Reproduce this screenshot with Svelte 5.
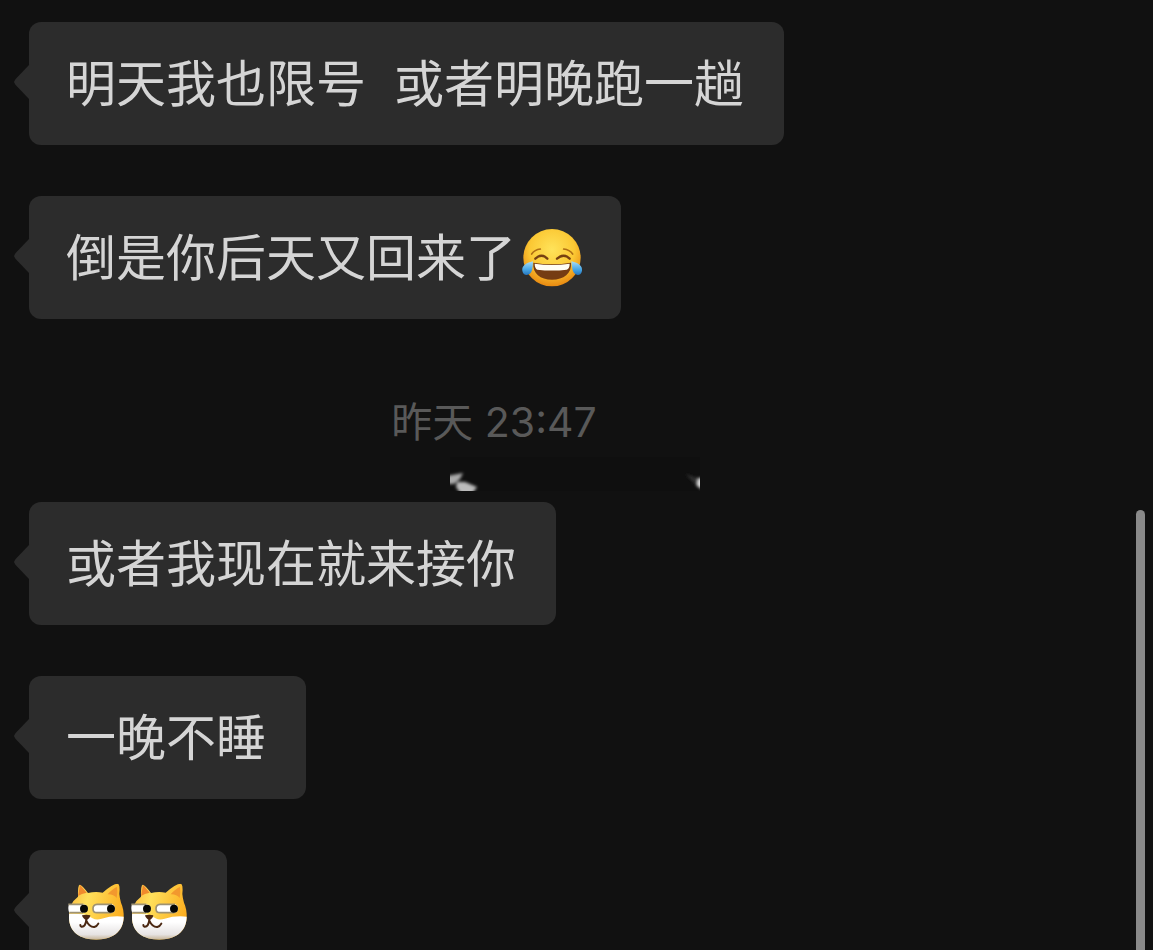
<script lang="ts">
	type Message = { text?: string; emoji?: 'joy' | 'doge'; count?: number };

	const earlier: Message[] = [
		{ text: '明天我也限号  或者明晚跑一趟' },
		{ text: '倒是你后天又回来了', emoji: 'joy', count: 1 }
	];
	const later: Message[] = [
		{ text: '或者我现在就来接你' },
		{ text: '一晚不睡' },
		{ emoji: 'doge', count: 2 }
	];
</script>

{#snippet joy()}
	<svg class="emoji joy" viewBox="35 38 186 180" role="img" aria-label="笑哭">
		<defs>
			<radialGradient id="joy-face" cx="0.5" cy="0.36" r="0.65">
				<stop offset="0" stop-color="#ffe35a" />
				<stop offset="0.6" stop-color="#fbc834" />
				<stop offset="1" stop-color="#e88710" />
			</radialGradient>
			<linearGradient id="joy-tear" x1="0" y1="0" x2="0" y2="1">
				<stop offset="0" stop-color="#a9dcf5" />
				<stop offset="0.6" stop-color="#47a7e6" />
				<stop offset="1" stop-color="#2877bd" />
			</linearGradient>
		</defs>
		<circle cx="128" cy="127" r="86" fill="url(#joy-face)" />
		<g fill="none" stroke="#774111" stroke-linecap="round">
			<path d="M67 116Q76 103 93 101M163 101Q181 103 190 116" stroke="#b06f14" stroke-width="5" />
			<path d="M78 130Q97 113 114 130M143 130Q163 113 181 130" stroke-width="7" />
		</g>
		<path d="M72 142Q128 151 185 142C188 174 163 193 128 193C93 193 69 174 72 142Z" fill="#753c13" />
		<path d="M76 145Q128 153 181 145Q181 160 172 163Q128 168 84 163Q76 159 76 145Z" fill="#fffdf4" />
		<path d="M71 138C48 143 37 153 39 166C41 183 63 183 68 165Q71 153 71 138Z" fill="url(#joy-tear)" />
		<path d="M186 138C209 143 220 153 218 166C216 183 195 183 190 165Q187 153 186 138Z" fill="url(#joy-tear)" />
	</svg>
{/snippet}

{#snippet doge()}
	<svg class="emoji" viewBox="18 22 180 180" role="img" aria-label="doge">
		<defs>
			<linearGradient id="doge-fur" x1="0" y1="0" x2="1" y2="0.3">
				<stop offset="0" stop-color="#f9ae35" />
				<stop offset="0.4" stop-color="#ffe05b" />
				<stop offset="1" stop-color="#fcae20" />
			</linearGradient>
			<linearGradient id="doge-muzzle" x1="0" y1="0" x2="0" y2="1">
				<stop offset="0.3" stop-color="#ffffff" />
				<stop offset="0.75" stop-color="#e6e3e3" />
				<stop offset="1" stop-color="#bda680" />
			</linearGradient>
			<clipPath id="doge-head">
				<path d="M54 66Q53 28 60 30Q66 31 84 55Q107 49 128 54Q158 27 173 27Q181 28 178 58Q179 70 183 84Q192 104 191 128C190 174 154 195 109 195C60 195 27 172 27 128Q24 88 54 66Z" />
			</clipPath>
		</defs>
		<g clip-path="url(#doge-head)">
			<rect x="20" y="20" width="180" height="180" fill="url(#doge-fur)" />
			<path d="M54 64L60 30L80 54Q65 56 54 64Z" fill="#f08a2c" />
			<path d="M143 59Q158 42 171 37Q174 52 170 70Q160 58 143 59Z" fill="#f2982e" />
			<path d="M20 118Q50 116 68 119L84 122Q103 140 125 132Q160 121 198 127V200H20Z" fill="url(#doge-muzzle)" />
		</g>
		<path d="M27 89H70Q83 90 83 102Q82 114 69 114H28Q22 102 27 89Z" fill="#fff" />
		<rect x="99" y="89" width="66" height="25" rx="12" fill="#fff" />
		<path d="M25 89H70M28 114H69M156 89H111Q99 90 99 102Q99 114 111 114H154" fill="none" stroke="#9e9273" stroke-width="5" />
		<circle cx="72" cy="102" r="12" fill="#080704" />
		<circle cx="153" cy="102" r="12" fill="#080704" />
		<path d="M66 122Q79 119 91 122Q90 132 79 136Q68 132 66 122Z" fill="#4b2812" />
		<path d="M79 134Q77 158 64 156Q61 154 61 151M79 138Q88 158 103 157Q111 155 115 147" fill="none" stroke="#4b2812" stroke-width="6" stroke-linecap="round" />
	</svg>
{/snippet}

{#snippet bubble(message: Message)}
	<li class="bubble">
		{#if message.text}<span>{message.text}</span>{/if}
		{#each Array(message.count ?? 0) as _}
			{#if message.emoji === 'joy'}
				{@render joy()}
			{:else}
				{@render doge()}
			{/if}
		{/each}
	</li>
{/snippet}

<main class="chat">
	<ul>
		{#each earlier as message}
			{@render bubble(message)}
		{/each}
	</ul>

	<div class="divider">
		<time>昨天 23:47</time>
		<svg class="smudge" viewBox="0 0 250 34" aria-hidden="true">
			<defs>
				<filter id="soft" x="-20%" y="-20%" width="140%" height="140%">
					<feGaussianBlur stdDeviation="1.5" />
				</filter>
			</defs>
			<rect width="250" height="34" fill="#0f0f0f" />
			<g filter="url(#soft)">
				<path d="M-3 19L13 16L10 22L4 27H-3Z" fill="#aaa" />
				<path d="M7 25L15 25L27 30L22 37H11L6 30Z" fill="#bbb" />
				<path d="M236 17L246 21L251 30L246 28Z" fill="#333" />
				<path d="M248 21H253V33L247 29Z" fill="#ddd" />
			</g>
		</svg>
	</div>

	<ul>
		{#each later as message}
			{@render bubble(message)}
		{/each}
	</ul>

	<div class="scroll-thumb"></div>
</main>

<style>
	:global(body) {
		background: #111;
	}

	.chat {
		position: relative;
		box-sizing: border-box;
		height: 100vh;
		padding: 22px 29px 0;
		overflow: hidden;
		color: #d5d5d5;
		font-family: Inter, 'Noto Sans CJK SC', sans-serif;
		font-size: 50px;
		line-height: 60px;
	}

	ul {
		display: flex;
		flex-direction: column;
		align-items: flex-start;
		gap: 51px;
		margin: 0;
		padding: 0;
		list-style: none;
	}

	.bubble {
		position: relative;
		display: flex;
		align-items: center;
		gap: 3px;
		box-sizing: border-box;
		min-height: 123px;
		padding: 0 38px 0 37px;
		border-radius: 12px;
		background: #2c2c2c;
		white-space: pre;
	}

	.bubble::before {
		content: '';
		position: absolute;
		top: 42px;
		left: -15px;
		width: 16px;
		height: 36px;
		background: #2c2c2c;
		clip-path: polygon(100% 0, 10% 42%, 0 50%, 10% 58%, 100% 100%);
	}

	.bubble span {
		margin-right: 2px;
	}

	.emoji {
		width: 60px;
		height: 60px;
	}

	.joy {
		width: 62px;
	}

	.divider {
		display: flex;
		flex-direction: column;
		align-items: center;
		gap: 10px;
		padding: 78px 3px 11px 0;
	}

	time {
		margin-right: 162px;
		color: #595959;
		font-size: 41px;
		line-height: 50px;
	}

	.smudge {
		width: 250px;
		height: 34px;
	}

	.scroll-thumb {
		position: absolute;
		top: 510px;
		right: 8px;
		bottom: -8px;
		width: 9px;
		border-radius: 5px;
		background: #8a8a8a;
	}
</style>
